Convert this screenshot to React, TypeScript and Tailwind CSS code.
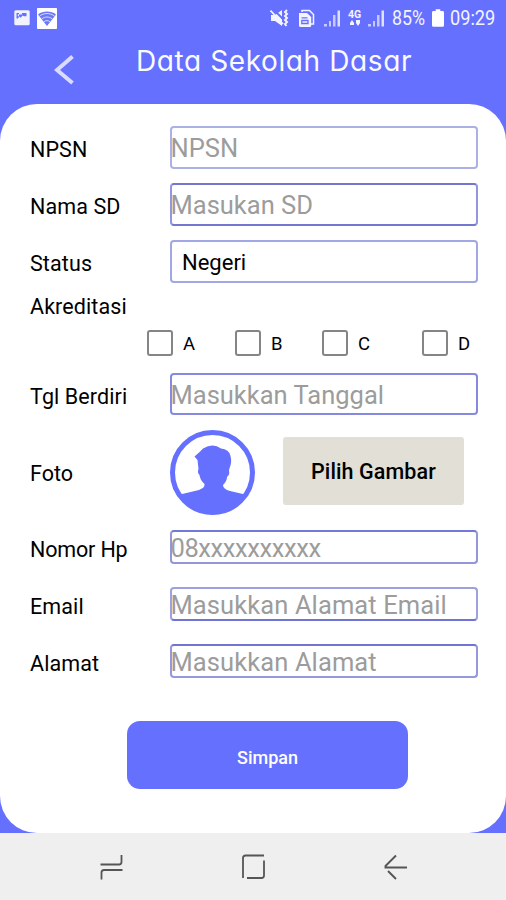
import type { ReactNode } from "react";

function StatusBar() {
  return (
    <div className="flex h-[36px] items-center pl-[14px] pr-[10px] text-[#f4f4ff]">
      <svg width="16" height="16" viewBox="0 0 16 16">
        <rect x="0.3" y="0.3" width="15.4" height="15" rx="1.5" fill="#f1f2ff" />
        <path d="M2.500 3v5.500h1.300l1.700-2 1.300 1.200 1.700-2.200 1.500.8h2.500V3H8v1.500H5V3z" fill="#6570ff" />
        <path d="M3.800 4.200h1.200v2h-1.200z" fill="#f1f2ff" />
      </svg>
      <svg className="ml-[7px]" width="20" height="21" viewBox="0 0 20 21">
        <rect width="20" height="21" rx="0.7" fill="#fff" />
        <path d="M1 6.400C6 2.600 14 2.600 19 6.400L10 18z" fill="#6c78f4" />
        <path d="M2.600 8c4.400-3.300 10.400-3.300 14.800 0M4.800 10.900c3-2.500 7.400-2.500 10.400 0M7 13.700c1.800-1.400 4.200-1.400 6 0" fill="none" stroke="#e4e6ff" strokeWidth="0.900" />
      </svg>
      <svg className="ml-auto" width="19" height="20" viewBox="0 0 19 20">
        <path d="M1 7h4l7-5v16l-7-5H1z" fill="currentColor" />
        <path d="M3 1l11 11" stroke="#6570ff" strokeWidth="2" />
        <path d="M0.500 2.500L13 16" stroke="currentColor" strokeWidth="1.800" />
        <path d="M17 2l-2 2 2 2-2 2 2 2-2 2 2 2-2 2 1.500 2" fill="none" stroke="currentColor" strokeWidth="2" />
      </svg>
      <svg className="ml-[9px]" width="17" height="19" viewBox="0 0 17 19">
        <path d="M4 3V1.500h7.500l4 4V15H13" fill="none" stroke="currentColor" strokeWidth="1.500" />
        <path d="M1 4h8l4.200 4v8.500q0 1.500-1.500 1.500h-9Q1 18 1 16.500z" fill="currentColor" />
        <path d="M3.500 8.800h6M3.800 11.500h6.200v3H3.800z" fill="none" stroke="#6570ff" strokeWidth="1.300" />
      </svg>
      <Signal className="ml-[9px]" />
      <div className="ml-[6px] flex w-[15px] flex-col items-center">
        <span className="font-['Roboto',sans-serif] text-[10.500px] font-bold leading-[10px]">4G</span>
        <svg width="10" height="6" viewBox="0 0 10 6">
          <path d="M0 3L2 0l2 3v2H0zM6 0h4v3L8 6 6 3z" fill="currentColor" />
        </svg>
      </div>
      <Signal className="ml-[6px]" />
      <div className="ml-[7px] w-[34px] font-['Roboto',sans-serif] text-[20px] leading-[22px]">
        <span className="inline-block origin-left scale-x-[0.89]">85%</span>
      </div>
      <svg className="ml-[6px]" width="12" height="18" viewBox="0 0 13 19">
        <path d="M4 0h5v2h2.500Q13 2 13 3.500v14Q13 19 11.500 19h-10Q0 19 0 17.500v-14Q0 2 1.500 2H4z" fill="#fff" />
      </svg>
      <div className="ml-[6px] w-[46px] font-['Roboto',sans-serif] text-[20px] leading-[22px]">
        <span className="inline-block origin-left scale-x-[0.91]">09:29</span>
      </div>
    </div>
  );
}

function Signal({ className }: { className: string }) {
  return (
    <svg className={className} width="17" height="18" viewBox="0 0 17 18">
      <path d="M0 15h3v2.500H0zM5 12h2v5.500H5zM9 6h2.500v11.500H9z" fill="#c5c9ff" />
      <path d="M13.500 1.500H16v16h-2.500z" fill="#dfe1ff" />
    </svg>
  );
}

function Row({ label, className, labelClass = "pt-[5px] tracking-[0.1px]", children }: { label: string; className: string; labelClass?: string; children?: ReactNode }) {
  return (
    <div className={`flex items-center pl-[30px] ${className}`}>
      <span className={`w-[140px] shrink-0 whitespace-nowrap text-[21.500px] leading-[26px] ${labelClass}`}>{label}</span>
      {children}
    </div>
  );
}

function Field({ hint, className }: { hint: string; className: string }) {
  return (
    <div className={`flex h-full w-[308px] items-center whitespace-nowrap rounded-[4px] border-2 text-[25.500px] leading-[30px] text-[#9c9c9c] ${className}`}>
      <span className="-ml-[1.500px] pt-[1px]">{hint}</span>
    </div>
  );
}

function Check({ letter, className }: { letter: string; className: string }) {
  return (
    <div className={`flex items-center ${className}`}>
      <span className="h-[26px] w-[26px] rounded-[3px] border-[2.500px] border-[#858585]" />
      <span className="ml-[10px] pt-[2px] text-[18.500px] leading-[24px]">{letter}</span>
    </div>
  );
}

export default function App() {
  return (
    <div className="flex h-[900px] w-[506px] flex-col overflow-hidden bg-[#6570ff] font-['Roboto',sans-serif] text-black">
      <StatusBar />
      <header className="flex h-[68px] shrink-0 items-start pl-[54px]">
        <svg className="mt-[18px]" width="22" height="31" viewBox="0 0 22 31">
          <path d="M18.500 2.500L3 16l15.500 13" fill="none" stroke="#d9dbff" strokeWidth="4" />
        </svg>
        <h1 className="ml-[60px] mt-[8px] whitespace-nowrap font-['Inter',sans-serif] text-[28px] leading-[34px] tracking-[0.600px] text-[#fafaff] [font-feature-settings:'cv11']">
          Data Sekolah Dasar
        </h1>
      </header>
      <main className="flex h-[729px] shrink-0 flex-col rounded-[37px] bg-white pt-[22px]">
        <Row label="NPSN" className="h-[43px]">
          <Field hint="NPSN" className="border-[#abb0e5]" />
        </Row>
        <Row label="Nama SD" className="mt-[14px] h-[43px]">
          <Field hint="Masukan SD" className="border-x-[#9296dc] border-y-[#7377cf]" />
        </Row>
        <Row label="Status" className="mt-[14px] h-[43px]">
          <div className="flex h-full w-[308px] items-center rounded-[4px] border-2 border-[#a1a6e4] pl-[10px] pt-[3px] text-[22px] leading-[26px]">
            Negeri
          </div>
        </Row>
        <Row label="Akreditasi" className="mt-[8px] h-[26px]" />
        <div className="mt-[13px] flex h-[26px] pl-[147px]">
          <Check letter="A" className="w-[88px]" />
          <Check letter="B" className="w-[87px]" />
          <Check letter="C" className="w-[100px]" />
          <Check letter="D" className="" />
        </div>
        <Row label="Tgl Berdiri" className="mt-[17px] h-[42px]">
          <Field hint="Masukkan Tanggal" className="border-[#858ae0]" />
        </Row>
        <Row label="Foto" labelClass="pt-[2px]" className="mt-[15px] h-[85px]">
          <svg width="85" height="85" viewBox="0 0 85 85">
            <circle cx="42.500" cy="42.500" r="40" fill="#fff" stroke="#6570ff" strokeWidth="5" />
            <path d="M10 64.500L29 60Q35 58 34.500 54Q30 50 29.500 45Q27 43 28.500 39L27.500 30L24.500 26.500Q30 22 33 18.500Q43 12.500 51 18.500Q59 19 60.500 26Q62 32 60 37Q59 39 59 41Q60 45 57 47Q57 51 53 55Q53 59 60 61L75 64.500Q64 82.500 42.500 82.500T10 64.500z" fill="#6570ff" />
          </svg>
          <button className="mb-[3px] ml-[28px] h-[68px] w-[181px] rounded-[3px] bg-[#e1dfd6] pt-[2px] text-[21.500px] font-medium tracking-[0.100px]">
            Pilih Gambar
          </button>
        </Row>
        <Row label="Nomor Hp" labelClass="pt-[5px] tracking-[-0.150px]" className="mt-[15px] h-[34px]">
          <Field hint="08xxxxxxxxxx" className="tracking-[-0.400px] border-[#9297dc] border-t-[#7479d9]" />
        </Row>
        <Row label="Email" className="mt-[23px] h-[34px]">
          <Field hint="Masukkan Alamat Email" className="tracking-[0.100px] border-[#9da1df] border-b-[#7075d3]" />
        </Row>
        <Row label="Alamat" className="mt-[23px] h-[34px]">
          <Field hint="Masukkan Alamat" className="tracking-[0.100px] border-[#9598dc] border-t-[#7075d3]" />
        </Row>
        <button className="ml-[127px] mt-[43px] h-[68px] w-[281px] rounded-[13px] bg-[#6570ff] pt-[4px] text-[18px] font-medium text-white">
          Simpan
        </button>
      </main>
      <nav className="flex grow items-center bg-[#efefef] pl-[99px] pt-[1px] text-[#555]">
        <svg width="25" height="28" viewBox="0 0 25 28" fill="none" stroke="currentColor" strokeWidth="1.800">
          <path d="M1.500 11.500H20q2.500 0 2.500-2.500V2M23.500 17H5q-2.500 0-2.500 2.500V26.500" />
        </svg>
        <svg className="ml-[117px]" width="25" height="26" viewBox="0 0 25 26" fill="none" stroke="currentColor" strokeWidth="1.800">
          <path d="M2 24V4q0-2.500 2.500-2.500H23M23 6.500V21.500q0 2.500-2.500 2.500H6" />
        </svg>
        <svg className="ml-[117px]" width="25" height="28" viewBox="0 0 25 28" fill="none" stroke="currentColor" strokeWidth="1.900">
          <path d="M13 2.500L2.500 13v1.500H24M5 18L13 26" />
        </svg>
      </nav>
    </div>
  );
}
